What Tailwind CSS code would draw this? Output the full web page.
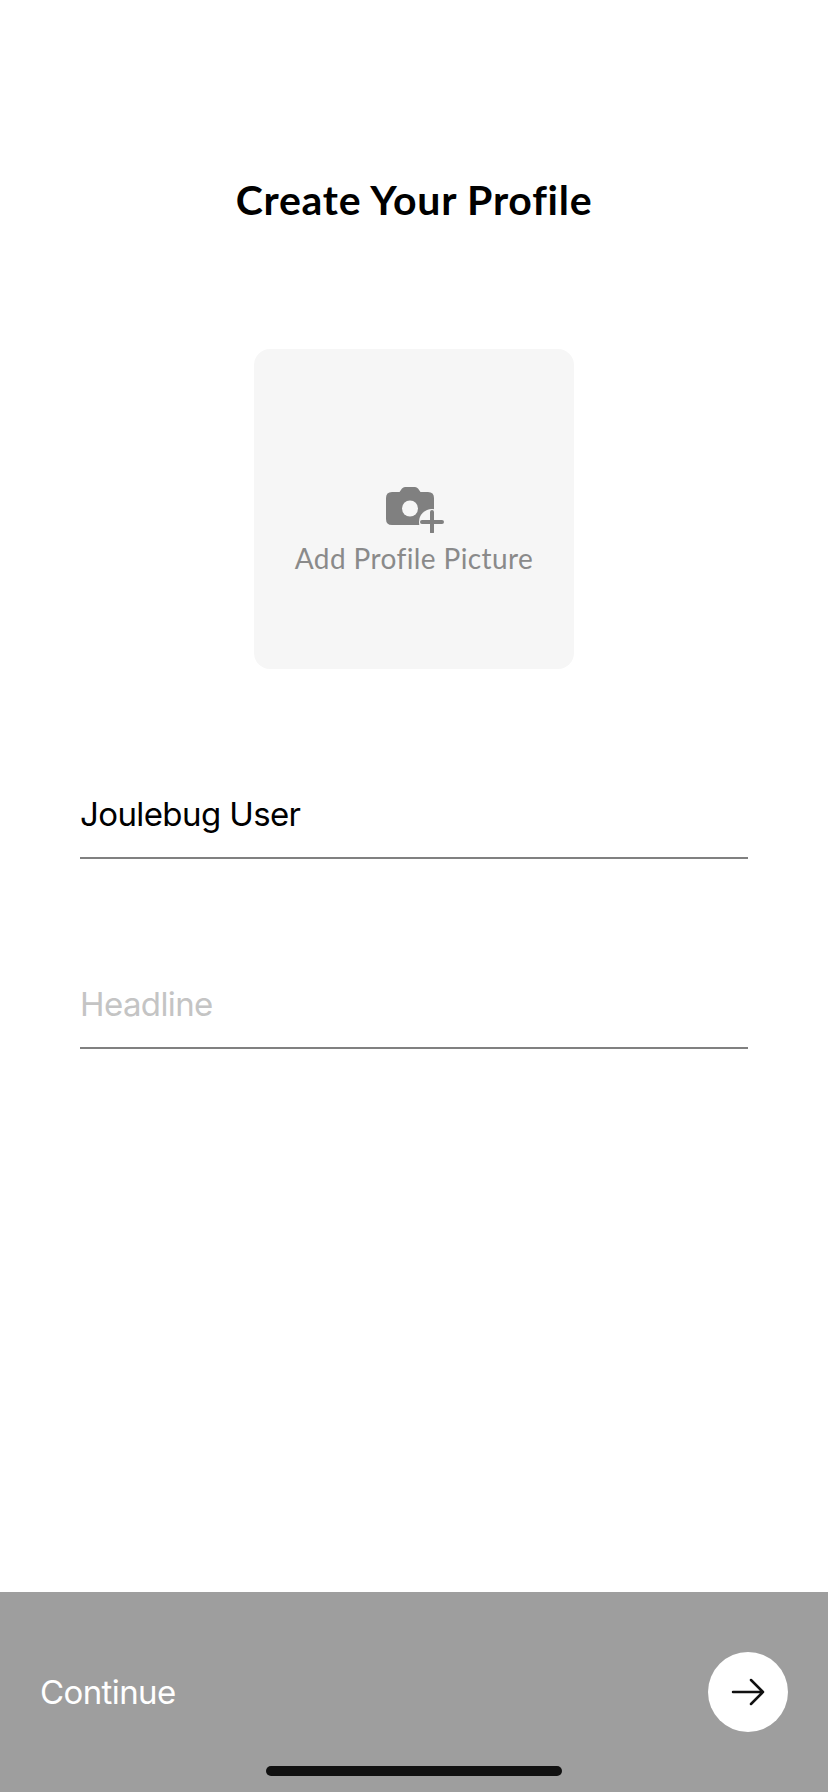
<!DOCTYPE html>
<html lang="en">
<head>
  <meta charset="UTF-8">
  <meta name="viewport" content="width=device-width, initial-scale=1.0">
  <title>Create Your Profile</title>
  <script src="https://cdn.jsdelivr.net/npm/@tailwindcss/browser@4"></script>
</head>
<body class="bg-white">
  <div class="w-[828px] h-[1792px] flex flex-col overflow-hidden">
    <!-- Title -->
    <h1 class="mt-[176px] h-[48px] leading-[48px] text-center text-[41px] font-bold tracking-[0.75px] text-black font-['Lato',sans-serif]">Create Your Profile</h1>

    <!-- Profile picture -->
    <div class="mt-[125px] mx-auto w-[320px] h-[320px] rounded-[16px] bg-[#f6f6f6] flex flex-col items-center">
      <svg class="mt-[138px] ml-[2px]" width="58" height="46" viewBox="0 0 58 46">
        <path fill="#808080" d="M6 5h7.500l2.500-3.500q1.200-1.500 3-1.500h10q1.800 0 3 1.500l2.500 3.500h7.500q6 0 6 6v21q0 6-6 6H6q-6 0-6-6V11q0-6 6-6z"/>
        <circle cx="24" cy="21.500" r="8" fill="#f6f6f6"/>
        <circle cx="46" cy="35" r="13" fill="#f6f6f6"/>
        <path d="M46 25v20M36 35h20" stroke="#808080" stroke-width="4" stroke-linecap="round" fill="none"/>
      </svg>
      <p class="mt-[7px] text-[28px] leading-[36px] tracking-[0.4px] text-[#8a8a8a] font-['Lato',sans-serif]">Add Profile Picture</p>
    </div>

    <!-- Fields -->
    <div class="mt-[118px] mx-[80px] flex flex-col gap-[118px] font-['Inter',sans-serif]">
      <div class="h-[72px] border-b-2 border-[#808080] text-[33px] leading-[54px] text-black -tracking-[0.6px]">Joulebug User</div>
      <div class="h-[72px] border-b-2 border-[#808080] text-[33px] leading-[54px] text-[#c4c4c4] -tracking-[0.6px]">Headline</div>
    </div>

    <!-- Continue bar -->
    <div class="mt-auto h-[200px] bg-[#9e9e9e] relative">
      <div class="flex items-center justify-between pl-[40px] pr-[40px] pt-[60px]">
        <span class="text-[33px] leading-[80px] text-white font-['Inter',sans-serif] -tracking-[0.6px]">Continue</span>
        <div class="w-[80px] h-[80px] rounded-full bg-white flex items-center justify-center">
          <svg width="34" height="28" viewBox="0 0 34 28" fill="none" stroke="#111111" stroke-width="2.500" stroke-linecap="round" stroke-linejoin="round">
            <path d="M2 14h30M20 2l12 12-12 12"/>
          </svg>
        </div>
      </div>
      <div class="absolute left-[266px] bottom-[16px] w-[296px] h-[10px] rounded-full bg-[#111111]"></div>
    </div>
  </div>
</body>
</html>
